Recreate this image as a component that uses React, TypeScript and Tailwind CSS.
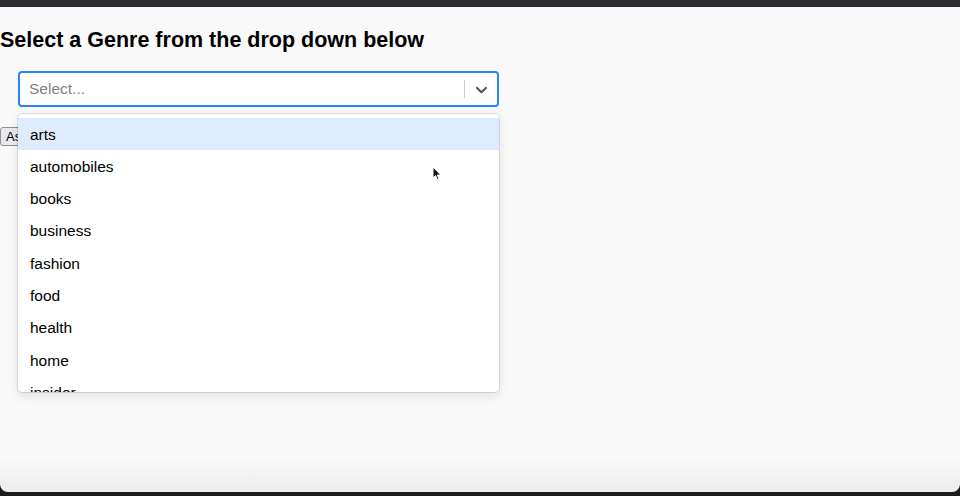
import React from "react";

const genres = ["arts", "automobiles", "books", "business", "fashion", "food", "health", "home", "insider"];

const App = () => {
  return (
    <div className="w-[960px] h-[496px] bg-[#1c1c1e] flex flex-col overflow-hidden font-['Liberation_Sans',Arial,sans-serif]">
      <div className="h-[7px] bg-[#2b2c30] shrink-0"></div>
      <div className="relative flex-1 rounded-b-[8px] mb-[4px] bg-gradient-to-b from-[#f9f9f9] from-93% to-[#ededed]">
        <h3 className="text-[21.5px] font-bold text-black leading-none pt-[23px] m-0">
          Select a Genre from the drop down below
        </h3>
        <div className="relative ml-[18px] mt-[19.5px] w-[481px]">
          <div className="h-[36px] bg-white border-2 border-[#2684ff] rounded-[4px] flex items-center">
            <span className="flex-1 pl-[9px] text-[15.5px] text-[#808080]">Select...</span>
            <span className="w-px h-[18px] bg-[#cccccc]"></span>
            <span className="w-[32px] flex justify-center text-[#555555]">
              <svg width="19" height="19" viewBox="0 0 20 20" fill="currentColor">
                <path d="M4.516 7.548c0.436-0.446 1.043-0.481 1.576 0l3.908 3.747 3.908-3.747c0.533-0.481 1.141-0.446 1.574 0 0.436 0.445 0.408 1.197 0 1.615-0.406 0.418-4.695 4.502-4.695 4.502-0.217 0.223-0.502 0.335-0.787 0.335s-0.57-0.112-0.789-0.335c0 0-4.287-4.084-4.695-4.502s-0.436-1.17 0-1.615z" />
              </svg>
            </span>
          </div>
          <div className="absolute left-0 right-0 top-[43px] z-10 bg-white rounded-[4px] shadow-[0_0_0_1px_rgba(0,0,0,0.1),0_4px_11px_rgba(0,0,0,0.1)] overflow-hidden">
            <div className="h-[278px] overflow-hidden py-[4px]">
              {genres.map((g, i) => (
                <div
                  key={g}
                  className={`h-[32.3px] flex items-center pl-[12px] text-[15.5px] text-black ${i === 0 ? "bg-[#deebff]" : ""}`}
                >
                  {g}
                </div>
              ))}
            </div>
          </div>
        </div>
        <button className="mt-[20px] ml-0 h-[19px] px-[5px] text-[13px] leading-none bg-[#e9e9ed] border border-[#8f8f9d] rounded-[3px] text-black">
          Ask
        </button>
        <svg className="absolute left-[432px] top-[159px] z-20" width="10" height="15" viewBox="0 0 10 15">
          <path d="M1 1 L1 12 L3.6 9.6 L5.4 13.6 L7 12.9 L5.3 9 L8.8 9 Z" fill="#111" stroke="#fff" strokeWidth="1" />
        </svg>
      </div>
    </div>
  );
};

export default App;
